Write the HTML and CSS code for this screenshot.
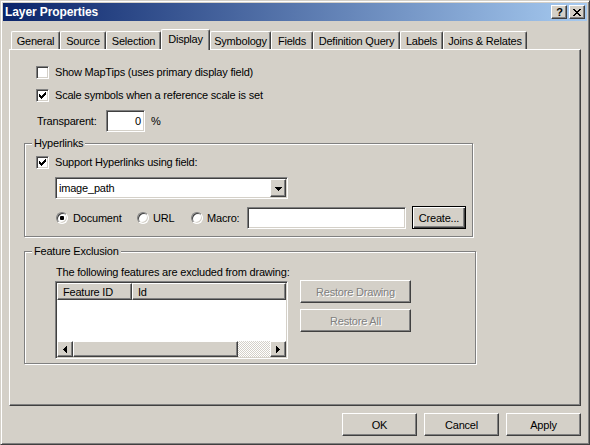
FILE: index.html
```html
<!DOCTYPE html>
<html>
<head>
<meta charset="utf-8">
<title>Layer Properties</title>
<link rel="stylesheet" href="styles.css">
</head>
<body>
<div class="window">
  <div class="titlebar">
    <span class="title">Layer Properties</span>
    <div class="caption-btns">
      <div class="cbtn help">?</div>
      <div class="cbtn close"><svg width="8" height="7" viewBox="0 0 8 7" shape-rendering="crispEdges"><path d="M0 0h2v1H0z M6 0h2v1H6z M1 1h2v1H1z M5 1h2v1H5z M2 2h4v1H2z M3 3h2v1H3z M2 4h4v1H2z M1 5h2v1H1z M5 5h2v1H5z M0 6h2v1H0z M6 6h2v1H6z" fill="#000"/></svg></div>
    </div>
  </div>
  <div class="client">
    <div class="tabs">
      <div class="tab t-general">General</div>
      <div class="tab t-source">Source</div>
      <div class="tab t-selection">Selection</div>
      <div class="tab t-display active">Display</div>
      <div class="tab t-symbology">Symbology</div>
      <div class="tab t-fields">Fields</div>
      <div class="tab t-defq">Definition Query</div>
      <div class="tab t-labels">Labels</div>
      <div class="tab t-joins">Joins &amp; Relates</div>
    </div>
    <div class="panel">
      <div class="row chk-row first">
        <span class="checkbox sunken"></span>
        <span>Show MapTips (uses primary display field)</span>
      </div>
      <div class="row chk-row second">
        <span class="checkbox sunken"><svg width="7" height="7" viewBox="0 0 7 7" shape-rendering="crispEdges"><path d="M0 2h1v3H0z M1 3h1v3H1z M2 4h1v3H2z M3 3h1v3H3z M4 2h1v3H4z M5 1h1v3H5z M6 0h1v3H6z" fill="#000"/></svg></span>
        <span>Scale symbols when a reference scale is set</span>
      </div>
      <div class="row trans-row">
        <span class="trans-label">Transparent:</span>
        <span class="field num sunken">0</span>
        <span class="pct">%</span>
      </div>

      <div class="group hyper">
        <span class="legend">Hyperlinks</span>
        <div class="row chk-row in-group">
          <span class="checkbox sunken"><svg width="7" height="7" viewBox="0 0 7 7" shape-rendering="crispEdges"><path d="M0 2h1v3H0z M1 3h1v3H1z M2 4h1v3H2z M3 3h1v3H3z M4 2h1v3H4z M5 1h1v3H5z M6 0h1v3H6z" fill="#000"/></svg></span>
          <span>Support Hyperlinks using field:</span>
        </div>
        <div class="combo sunken">
          <span class="combo-text">image_path</span>
          <span class="combo-btn raised"><svg width="7" height="4" viewBox="0 0 7 4" shape-rendering="crispEdges"><path d="M0 0h7v1H0z M1 1h5v1H1z M2 2h3v1H2z M3 3h1v1H3z" fill="#000"/></svg></span>
        </div>
        <div class="radio-row">
          <span class="opt opt-doc"><span class="radio on"></span><span>Document</span></span>
          <span class="opt opt-url"><span class="radio"></span><span>URL</span></span>
          <span class="opt opt-macro"><span class="radio"></span><span>Macro:</span></span>
          <span class="field macro-field sunken"></span>
          <span class="btn default create">Create...</span>
        </div>
      </div>

      <div class="group feature">
        <span class="legend">Feature Exclusion</span>
        <div class="note">The following features are excluded from drawing:</div>
        <div class="fe-row">
          <div class="listview sunken">
            <div class="lv-header">
              <div class="lv-col c1 raised">Feature ID</div>
              <div class="lv-col c2 raised">Id</div>
            </div>
            <div class="lv-body"></div>
            <div class="hscroll">
              <div class="sbtn raised"><svg width="4" height="7" viewBox="0 0 4 7" shape-rendering="crispEdges"><path d="M0 3h1v1H0z M1 2h1v3H1z M2 1h1v5H2z M3 0h1v7H3z" fill="#000"/></svg></div>
              <div class="thumb raised"></div>
              <div class="track"></div>
              <div class="sbtn raised"><svg width="4" height="7" viewBox="0 0 4 7" shape-rendering="crispEdges"><path d="M0 0h1v7H0z M1 1h1v5H1z M2 2h1v3H2z M3 3h1v1H3z" fill="#000"/></svg></div>
            </div>
          </div>
          <div class="fe-btns">
            <div class="btn wide disabled">Restore Drawing</div>
            <div class="btn wide disabled">Restore All</div>
          </div>
        </div>
      </div>
    </div>
    <div class="buttons">
      <div class="btn dlg">OK</div>
      <div class="btn dlg">Cancel</div>
      <div class="btn dlg">Apply</div>
    </div>
  </div>
</div>
</body>
</html>
```
FILE: styles.css
```css
* { box-sizing: border-box; }
html, body { margin: 0; padding: 0; background: #d4d0c8; }
body {
  font-family: "Liberation Sans", Arial, sans-serif;
  font-size: 11px;
  letter-spacing: -0.2px;
  color: #000;
}
svg { display: block; }

.window {
  width: 590px;
  height: 445px;
  background: #d4d0c8;
  border: 1px solid;
  border-color: #d4d0c8 #404040 #404040 #d4d0c8;
  box-shadow: inset 1px 1px #fff, inset -1px -1px #808080;
  padding: 2px;
  display: flex;
  flex-direction: column;
}

.titlebar {
  height: 18px;
  flex: none;
  display: flex;
  align-items: center;
  justify-content: space-between;
  padding: 0 2px 0 2px;
  background: linear-gradient(to right, #0a246a, #a6caf0);
}
.title {
  color: #fff;
  font-weight: bold;
  font-size: 12px;
  letter-spacing: -0.1px;
  line-height: 18px;
}
.caption-btns { display: flex; gap: 2px; }
.cbtn {
  width: 16px;
  height: 14px;
  background: #d4d0c8;
  border: 1px solid;
  border-color: #fff #404040 #404040 #fff;
  box-shadow: inset -1px -1px #808080;
  display: flex;
  align-items: center;
  justify-content: center;
}
.cbtn.help {
  font-weight: bold;
  font-size: 11px;
  line-height: 12px;
  letter-spacing: 0;
  padding-left: 1px;
}

.client {
  flex: 1;
  display: flex;
  flex-direction: column;
  padding: 8px 6px 0 6px;
}

.tabs {
  height: 20px;
  display: flex;
  align-items: flex-end;
  padding-left: 2px;
}
.tab {
  height: 18px;
  background: #d4d0c8;
  border-top: 1px solid #fff;
  border-left: 1px solid #fff;
  border-right: 1px solid #404040;
  box-shadow: inset -1px 0 #808080;
  border-top-left-radius: 2px;
  border-top-right-radius: 2px;
  display: flex;
  align-items: center;
  justify-content: center;
  white-space: nowrap;
}
.tab.active {
  height: 21px;
  margin-bottom: -1px;
  position: relative;
  z-index: 1;
  padding-bottom: 2px;
}
.t-general { width: 49px; }
.t-source { width: 46px; }
.t-selection { width: 55px; }
.t-display { width: 49px; }
.t-symbology { width: 61px; }
.t-fields { width: 42px; }
.t-defq { width: 87px; }
.t-labels { width: 43px; }
.t-joins { width: 84px; }

.panel {
  height: 357px;
  flex: none;
  background: #d4d0c8;
  border: 1px solid;
  border-color: #fff #404040 #404040 #fff;
  box-shadow: inset -1px -1px #808080;
  display: flex;
  flex-direction: column;
}

.sunken {
  background: #fff;
  border: 1px solid;
  border-color: #808080 #fff #fff #808080;
  box-shadow: inset 1px 1px #404040, inset -1px -1px #d4d0c8;
}
.raised {
  background: #d4d0c8;
  border: 1px solid;
  border-color: #fff #404040 #404040 #fff;
  box-shadow: inset -1px -1px #808080;
}

.row { display: flex; align-items: center; }
.chk-row { height: 13px; gap: 6px; line-height: 13px; }
.chk-row.first { margin: 16px 0 0 26px; }
.chk-row.second { margin: 10px 0 0 26px; }
.chk-row.in-group { margin: 6px 0 0 11px; }

.checkbox {
  width: 13px;
  height: 13px;
  flex: none;
  display: flex;
  align-items: center;
  justify-content: center;
}

.trans-row { margin: 8px 0 0 27px; height: 22px; }
.trans-label { width: 69px; }
.field { height: 22px; display: flex; align-items: center; }
.field.num {
  width: 39px;
  justify-content: flex-end;
  padding-right: 3px;
}
.pct { margin-left: 6px; }

.group {
  flex: none;
  border: 1px solid #808080;
  box-shadow: inset 1px 1px #fff, 1px 1px #fff;
  display: flex;
  flex-direction: column;
  align-items: flex-start;
}
.hyper { margin: 11px 0 0 14px; width: 449px; height: 94px; }
.feature { margin: 14px 0 0 14px; width: 452px; height: 113px; }
.legend {
  height: 13px;
  line-height: 13px;
  margin: -7px 0 0 7px;
  padding: 0 2px;
  background: #d4d0c8;
}

.combo {
  margin: 8px 0 0 30px;
  width: 233px;
  height: 22px;
  padding: 1px;
  display: flex;
  align-items: stretch;
}
.combo-text {
  flex: 1;
  padding-left: 2px;
  display: flex;
  align-items: center;
}
.combo-btn {
  width: 16px;
  display: flex;
  align-items: center;
  justify-content: center;
  padding-top: 1px;
}

.radio-row {
  margin: 7px 0 0 31px;
  height: 23px;
  display: flex;
  align-items: center;
}
.opt { display: flex; align-items: center; gap: 5px; }
.opt-doc { width: 81px; }
.opt-url { width: 54px; gap: 4px; }
.opt-macro { width: 56px; gap: 4px; }
.radio {
  width: 12px;
  height: 12px;
  flex: none;
  border-radius: 50%;
  background: #fff;
  border: 1px solid;
  border-color: #808080 #fff #fff #808080;
  box-shadow: inset 1px 1px #404040, inset -1px -1px #d4d0c8;
  display: flex;
  align-items: center;
  justify-content: center;
}
.radio.on::after {
  content: "";
  width: 4px;
  height: 4px;
  border-radius: 1px;
  background: #000;
}
.macro-field { width: 159px; margin-right: 6px; }

.btn {
  background: #d4d0c8;
  border: 1px solid;
  border-color: #fff #404040 #404040 #fff;
  box-shadow: inset -1px -1px #808080;
  display: flex;
  align-items: center;
  justify-content: center;
  white-space: nowrap;
}
.btn.default {
  border: 1px solid #000;
  box-shadow: inset 1px 1px #fff, inset -1px -1px #404040, inset -2px -2px #808080;
}
.create { width: 54px; height: 23px; }
.btn.wide { width: 111px; height: 23px; }
.btn.disabled { color: #808080; text-shadow: 1px 1px 0 #fff; }
.btn.dlg { width: 75px; height: 23px; }

.note { margin: 8px 0 0 31px; height: 13px; line-height: 13px; }
.fe-row {
  margin: 1px 0 0 30px;
  display: flex;
  align-items: flex-start;
  gap: 12px;
}
.listview {
  margin-top: 1px;
  width: 233px;
  height: 78px;
  padding: 1px;
  display: flex;
  flex-direction: column;
}
.lv-header { height: 17px; display: flex; flex: none; }
.lv-col {
  height: 17px;
  display: flex;
  align-items: center;
  padding-left: 5px;
  white-space: nowrap;
}
.lv-col.c1 { width: 75px; }
.lv-col.c2 { flex: 1; }
.lv-body { flex: 1; background: #fff; }
.hscroll { height: 16px; display: flex; flex: none; }
.sbtn {
  width: 16px;
  height: 16px;
  display: flex;
  align-items: center;
  justify-content: center;
}
.thumb { width: 165px; height: 16px; }
.track {
  flex: 1;
  background-color: #fff;
  background-image: conic-gradient(#d4d0c8 25%, #fff 0 50%, #d4d0c8 0 75%, #fff 0);
  background-size: 2px 2px;
}
.fe-btns { display: flex; flex-direction: column; gap: 6px; }

.buttons {
  margin-top: 7px;
  display: flex;
  justify-content: flex-end;
  gap: 7px;
}
```
